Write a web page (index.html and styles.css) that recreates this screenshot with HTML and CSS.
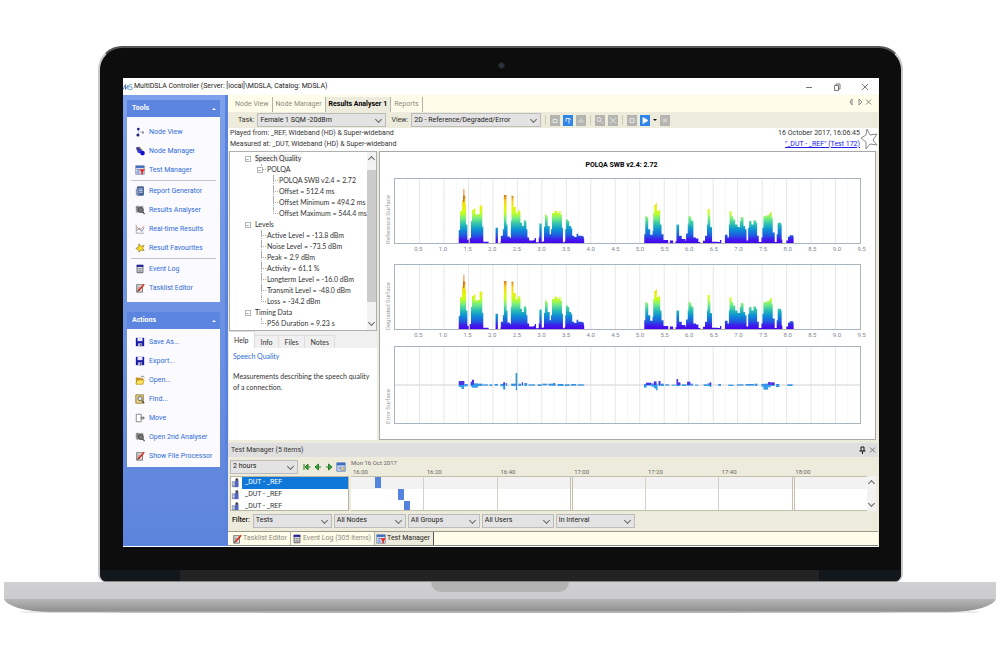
FILE: index.html
```
<!DOCTYPE html>
<html lang="en">
<head>
  <meta charset="UTF-8" />
  <title>MultiDSLA Controller</title>
  <link rel="stylesheet" href="styles.css">
</head>
<body>

<!-- Icon sprite -->
<svg class="sprite" width="0" height="0">
  <symbol id="i-nodes" viewBox="0 0 12 12"><path d="M4 2.500v6.500M4 5l5 1.500" stroke="#b8c0e0" fill="none"/><circle cx="4" cy="2.500" r="1.600" fill="#1c1c9c"/><circle cx="3.500" cy="9.500" r="1.800" fill="#1c1c78"/><circle cx="9.500" cy="6.500" r="1.400" fill="#8a8a96"/></symbol>
  <symbol id="i-nodeman" viewBox="0 0 12 12"><path d="M1 2l5-1 4 4-4 4-4-3z" fill="#d0c87a"/><path d="M1 2l4-1 2 4-4 1z" fill="#3a3a90"/><circle cx="5.500" cy="6" r="2.800" fill="#3838d0"/><circle cx="9" cy="8.500" r="2.800" fill="#1010d0"/></symbol>
  <symbol id="i-test" viewBox="0 0 12 12"><rect x="1" y="1" width="10" height="10" fill="#d8e0f0" stroke="#7a86a0"/><rect x="1" y="1" width="10" height="2.500" fill="#3c6cc0"/><path d="M2.500 5.500h3m-3 2h3m-3 2h3" stroke="#4a7ad0"/><path d="M5 5h7L9.500 8v3h-2V8z" fill="#e0281c"/></symbol>
  <symbol id="i-report" viewBox="0 0 12 12"><path d="M3 1h7v10H3z" fill="#4c6ea8" stroke="#2d456f"/><path d="M1 3h3v8H1z" fill="#8898b8"/><path d="M5 3.500h4m-4 2h4m-4 2h4" stroke="#dfe8f8"/></symbol>
  <symbol id="i-analyse" viewBox="0 0 12 12"><path d="M1 1h9v8H1z" fill="#a8a8a8"/><path d="M1 3h8M1 5h8M3 1v8" stroke="#777"/><circle cx="7" cy="6" r="3" fill="#777" stroke="#444"/><path d="M9 8l2.500 3" stroke="#444" stroke-width="1.500"/></symbol>
  <symbol id="i-real" viewBox="0 0 12 12"><path d="M1.500 1v10H11" stroke="#9a9a9a" fill="none"/><path d="M2 3l3 4 2-1 4-4" stroke="#e08a50" fill="none"/><path d="M2 8l3-3 3 4 3-5" stroke="#6a78b8" fill="none"/></symbol>
  <symbol id="i-fav" viewBox="0 0 12 12"><path d="M5 1l2 3 4-1-2 3 2 3-4-.5L5 11 4 8 1 6.500 4 5z" fill="#ffd820" stroke="#8a7820" stroke-width=".8"/></symbol>
  <symbol id="i-log" viewBox="0 0 12 12"><path d="M2.500 1.500h7v9h-7z" fill="#e0e0e8" stroke="#4a4a58"/><path d="M2 1h8v2.500H2z" fill="#22229a"/><path d="M4 5.500h4m-4 2h4m-4 2h4" stroke="#777"/></symbol>
  <symbol id="i-edit" viewBox="0 0 12 12"><path d="M2 2h7v9H2z" fill="#e4e4e4" stroke="#666"/><path d="M3 5h3M3 7h2" stroke="#777"/><path d="M4 9.500L11 1.500" stroke="#d83020" stroke-width="2"/><path d="M3 10.500l1-2" stroke="#222"/></symbol>
  <symbol id="i-save" viewBox="0 0 12 12"><path d="M1 1h10v10H1z" fill="#1a1aa8"/><path d="M3 1h6v4H3z" fill="#e8e8f8"/><path d="M3.500 7.500h5V11h-5z" fill="#b8b8d0"/><path d="M6.500 8h1v3h-1z" fill="#1a1a60"/></symbol>
  <symbol id="i-open" viewBox="0 0 12 12"><path d="M1 3h4l1 1h4v7H1z" fill="#c89820"/><path d="M3 6h8l-2 5H1z" fill="#ffe860" stroke="#a87c18" stroke-width=".7"/><path d="M7 3l2-2 2 2" stroke="#555" fill="none"/></symbol>
  <symbol id="i-find" viewBox="0 0 12 12"><path d="M1 1h9v10H1z" fill="#e8d080" stroke="#8c7430"/><circle cx="6" cy="5.500" r="2.500" fill="#dce8f8" stroke="#555"/><path d="M8 8l3 3" stroke="#444" stroke-width="1.500"/></symbol>
  <symbol id="i-move" viewBox="0 0 12 12"><path d="M1.500 1.500h6v9h-6z" fill="#fff" stroke="#777"/><path d="M6 6h4" stroke="#555"/><path d="M9 3.500L12 6 9 8.500z" fill="#777"/></symbol>
  <symbol id="i-rec" viewBox="0 0 12 12"><path d="M1 4h5v7H1z" fill="#8a93b0"/><path d="M5 3h4v8H5z" fill="#4c62c4"/><circle cx="7" cy="2" r="1.700" fill="#444"/><path d="M2 6h2m-2 2h2" stroke="#fff"/></symbol>
  <symbol id="i-logo" viewBox="0 0 12 12"><path d="M0 9l3-6v6l3-5v5" stroke="#3a68a8" fill="none"/><path d="M11 3H8v3h3v3H7" stroke="#5aa0c8" fill="none"/></symbol>
  <symbol id="i-cal" viewBox="0 0 12 12"><path d="M1 1h10v10H1z" fill="#cfdcf4" stroke="#5c7cb8"/><path d="M1 1h10v3H1z" fill="#3f6cc4"/><path d="M3 6h3M3 8h3" stroke="#6c8cd0"/><circle cx="8" cy="8" r="2" fill="#f0d890" stroke="#777" stroke-width=".7"/></symbol>
</svg>

<div class="laptop">
  <div class="lid">
    <div class="camera"></div>

    <div class="screen">
      <header class="titlebar">
        <svg class="icon"><use href="#i-logo"/></svg>
        <span class="title">MultiDSLA Controller (Server: [local]\MDSLA, Catalog: MDSLA)</span>
        <button class="winbtn" aria-label="Minimise"><svg viewBox="0 0 8 8"><path d="M1 4.500h6"/></svg></button>
        <button class="winbtn" aria-label="Restore"><svg viewBox="0 0 8 8"><path d="M1.500 2.500h4v5h-4zM3 2.500v-1.500h4v5H5.500"/></svg></button>
        <button class="winbtn" aria-label="Close"><svg viewBox="0 0 8 8"><path d="M1 1l6 6M7 1L1 7"/></svg></button>
      </header>

      <div class="app">
        <!-- Left side -->
        <nav class="sidebar">
          <section class="group">
            <h2>Tools <i class="up"></i></h2>
            <div class="links tools">
              <a href="#"><svg class="icon"><use href="#i-nodes"/></svg>Node View</a>
              <a href="#"><svg class="icon"><use href="#i-nodeman"/></svg>Node Manager</a>
              <a href="#"><svg class="icon"><use href="#i-test"/></svg>Test Manager</a>
              <hr>
              <a href="#"><svg class="icon"><use href="#i-report"/></svg>Report Generator</a>
              <a href="#"><svg class="icon"><use href="#i-analyse"/></svg>Results Analyser</a>
              <a href="#"><svg class="icon"><use href="#i-real"/></svg>Real-time Results</a>
              <a href="#"><svg class="icon"><use href="#i-fav"/></svg>Result Favourites</a>
              <hr>
              <a href="#"><svg class="icon"><use href="#i-log"/></svg>Event Log</a>
              <a href="#"><svg class="icon"><use href="#i-edit"/></svg>Tasklist Editor</a>
            </div>
          </section>
          <section class="group">
            <h2>Actions <i class="up"></i></h2>
            <div class="links">
              <a href="#"><svg class="icon"><use href="#i-save"/></svg>Save As...</a>
              <a href="#"><svg class="icon"><use href="#i-save"/></svg>Export...</a>
              <a href="#"><svg class="icon"><use href="#i-open"/></svg>Open...</a>
              <a href="#"><svg class="icon"><use href="#i-find"/></svg>Find...</a>
              <a href="#"><svg class="icon"><use href="#i-move"/></svg>Move</a>
              <a href="#"><svg class="icon"><use href="#i-analyse"/></svg>Open 2nd Analyser</a>
              <a href="#"><svg class="icon"><use href="#i-edit"/></svg>Show File Processor</a>
            </div>
          </section>
        </nav>

        <main class="content">
          <div class="tabs">
            <button>Node View</button>
            <button>Node Manager</button>
            <button class="active">Results Analyser 1</button>
            <button>Reports</button>
            <svg class="tabnav" viewBox="0 0 24 8"><path d="M4 1v6L2 4zM11 1v6l3-3zM18 1.500l5 5M23 1.500l-5 5"/></svg>
          </div>

          <div class="toolbar">
            <label for="task">Task:</label>
            <span class="pick task"><select id="task"><option>Female 1 SQM -20dBm</option></select></span>
            <label for="view">View:</label>
            <span class="pick view"><select id="view"><option>2D - Reference/Degraded/Error</option></select></span>
            <i class="grip"></i>
            <button class="tool" aria-label="Spectrum"><svg viewBox="0 0 10 10"><path d="M3 7h4V4H3z"/></svg></button>
            <button class="tool on" aria-label="Surface"><svg viewBox="0 0 10 10"><path d="M3 3h3v5M6 3l2 1M3 3v3"/></svg></button>
            <button class="tool" aria-label="Histogram"><svg viewBox="0 0 10 10"><path d="M3 7V5M5 7V3M7 7V5"/></svg></button>
            <i class="grip"></i>
            <button class="tool" aria-label="Zoom"><svg viewBox="0 0 10 10"><circle cx="4" cy="4" r="2"/><path d="M6 6l2 2"/></svg></button>
            <button class="tool" aria-label="Zoom out"><svg viewBox="0 0 10 10"><path d="M2 2l6 6M8 2L2 8"/></svg></button>
            <i class="grip"></i>
            <button class="tool" aria-label="Stop"><svg viewBox="0 0 10 10"><path d="M3 3h4v4H3z"/></svg></button>
            <button class="tool on" aria-label="Play"><svg viewBox="0 0 10 10"><path d="M3 2l5 3-5 3z" fill="#fff"/></svg></button>
            <i class="drop"></i>
            <button class="tool" aria-label="Pause"><svg viewBox="0 0 10 10"><path d="M4 3v4M6 3v4"/></svg></button>
          </div>

          <div class="info">
            <div>
              <p>Played from: _REF, Wideband (HD) &amp; Super-wideband</p>
              <p>Measured at: _DUT, Wideband (HD) &amp; Super-wideband</p>
            </div>
            <div class="when">
              <p>16 October 2017, 16:06:45</p>
              <p><a href="#">"_DUT - _REF" (Test 172)</a></p>
            </div>
            <svg class="star" viewBox="0 0 18 22"><path d="M7 1l3 6 7-1-4 6 4 5-7-1-4 5v-7L1 10l5-3z"/></svg>
          </div>

          <div class="analyser">
            <div class="left">
              <div class="treebox">
                <ul class="tree">
                  <li><b>−</b><span class="sel">Speech Quality</span>
                    <ul>
                      <li><b>−</b>POLQA
                        <ul>
                          <li>POLQA SWB v2.4 = 2.72</li>
                          <li>Offset = 512.4 ms</li>
                          <li>Offset Minimum = 494.2 ms</li>
                          <li>Offset Maximum = 544.4 ms</li>
                        </ul>
                      </li>
                    </ul>
                  </li>
                  <li><b>−</b>Levels
                    <ul>
                      <li>Active Level = -13.8 dBm</li>
                      <li>Noise Level = -73.5 dBm</li>
                      <li>Peak = 2.9 dBm</li>
                      <li>Activity = 61.1 %</li>
                      <li>Longterm Level = -16.0 dBm</li>
                      <li>Transmit Level = -48.0 dBm</li>
                      <li>Loss = -34.2 dBm</li>
                    </ul>
                  </li>
                  <li><b>−</b>Timing Data
                    <ul>
                      <li>P56 Duration = 9.23 s</li>
                    </ul>
                  </li>
                </ul>
                <div class="scroll"><i class="chev flip"></i><i class="thumb"></i><i class="chev"></i></div>
              </div>
              <div class="subtabs">
                <button class="active">Help</button>
                <button>Info</button>
                <button>Files</button>
                <button>Notes</button>
              </div>
              <div class="help">
                <h3>Speech Quality</h3>
                <p>Measurements describing the speech quality of a connection.</p>
              </div>
            </div>

            <div class="charts">
              <h1>POLQA SWB v2.4: 2.72</h1>
              <div class="chart">
                <span class="ylabel">Reference Surface</span>
                <svg class="plot surface" viewBox="0 0 1401 196" preserveAspectRatio="none"></svg>
                <div class="axis"></div>
              </div>
              <div class="chart">
                <span class="ylabel">Degraded Surface</span>
                <svg class="plot surface" viewBox="0 0 1401 196" preserveAspectRatio="none"></svg>
                <div class="axis"></div>
              </div>
              <div class="chart error">
                <span class="ylabel">Error Surface</span>
                <svg class="plot diff" viewBox="0 0 1401 230" preserveAspectRatio="none"></svg>
              </div>
            </div>
          </div>

          <!-- Test manager -->
          <section class="manager">
            <h2>Test Manager (5 items)
              <svg viewBox="0 0 18 8"><path d="M3 1h3v4M3 1v4M1.500 5h6M4.500 5v3" stroke="#111"/><path d="M12 1.500l5 5M17 1.500l-5 5"/></svg>
            </h2>
            <div class="grid">
              <div class="range">
                <span class="pick hours"><select aria-label="Range"><option>2 hours</option></select></span>
                <button aria-label="First"><svg viewBox="0 0 8 8"><path d="M1 1v6M7.500 4H4" /><path d="M5 1v6L2 4z"/></svg></button>
                <button aria-label="Previous"><svg viewBox="0 0 8 8"><path d="M7 4H4"/><path d="M4.500 1v6L1 4z"/></svg></button>
                <button aria-label="Next"><svg viewBox="0 0 8 8"><path d="M1 4h3"/><path d="M3.500 1v6L7 4z"/></svg></button>
                <svg class="icon"><use href="#i-cal"/></svg>
              </div>
              <div class="times">
                <p>Mon 16 Oct 2017</p>
                <div class="ticks">
                  <span>16:00</span><span>16:20</span><span>16:40</span><span>17:00</span><span>17:20</span><span>17:40</span><span>18:00</span>
                </div>
              </div>
              <ul class="tests">
                <li class="active"><svg class="icon"><use href="#i-rec"/></svg><span>_DUT - _REF</span></li>
                <li><svg class="icon"><use href="#i-rec"/></svg><span>_DUT - _REF</span></li>
                <li><svg class="icon"><use href="#i-rec"/></svg><span>_DUT - _REF</span></li>
              </ul>
              <div class="lanes">
                <div class="cells"><i></i><i></i><i class="hour"></i><i></i><i></i><i class="hour"></i><i></i></div>
                <div class="scroll"><i class="chev flip"></i><i class="chev"></i></div>
              </div>
            </div>
            <div class="filter">
              <strong>Filter:</strong>
              <span class="pick wide"><select aria-label="Type"><option>Tests</option></select></span>
              <span class="pick"><select aria-label="Nodes"><option>All Nodes</option></select></span>
              <span class="pick"><select aria-label="Groups"><option>All Groups</option></select></span>
              <span class="pick"><select aria-label="Users"><option>All Users</option></select></span>
              <span class="pick wide"><select aria-label="Interval"><option>In Interval</option></select></span>
            </div>
          </section>

          <div class="dock">
            <button><svg class="icon"><use href="#i-edit"/></svg>Tasklist Editor</button>
            <button><svg class="icon"><use href="#i-log"/></svg>Event Log (305 items)</button>
            <button class="active"><svg class="icon"><use href="#i-test"/></svg>Test Manager</button>
          </div>
        </main>
      </div>
    </div>

    <div class="hinge"></div>
  </div>
  <div class="base"><div class="notch"></div></div>
  <div class="foot"></div>
</div>

<script src="script.js"></script>
</body>
</html>
```
FILE: styles.css
```
* {
  box-sizing: border-box;
}

body {
  margin: 0;
  padding: 46px 4px 0;
  background: #fff;
  font-family: Roboto, "Liberation Sans", sans-serif;
  font-size: 7px;
  line-height: 11px;
  color: #333;
}

h1, h2, h3, p, ul {
  margin: 0;
  padding: 0;
  font-size: 7px;
}

ul {
  list-style: none;
}

button, select {
  font: inherit;
  color: inherit;
  border: 0;
  padding: 0;
  margin: 0;
  background: none;
}

svg {
  display: block;
}

.sprite {
  position: absolute;
}

.icon {
  width: 10px;
  height: 10px;
  flex: none;
}

/* laptop */
.lid {
  margin: 0 93px 0 94px;
  padding: 0 22px 0 23px;
  background: #0d0d0d;
  border: 2px solid #c8c8ca;
  border-top-color: #55575a;
  border-bottom: 1px solid #888;
  border-radius: 24px 24px 8px 8px;
}

.camera {
  height: 30px;
  display: flex;
  justify-content: center;
  align-items: center;
}

.camera::before {
  content: "";
  width: 5px;
  height: 5px;
  margin-top: 4px;
  border-radius: 50%;
  background: #2c3440;
  border: 1px solid #1c1c1c;
}

.hinge {
  height: 11px;
  margin: 23px -22px 0 -23px;
  border-radius: 0 0 6px 6px;
  background: linear-gradient(90deg, #11171b 80px, #232323 80px, #232323 calc(100% - 82px), #11171b calc(100% - 82px));
}

.base {
  height: 30px;
  background: linear-gradient(#d0d0d2 0, #cbcbcd 17px, #b6b6b6 17px, #8e8e8e 100%);
  border-radius: 0 0 48px 48px / 0 0 14px 14px;
}

.notch {
  width: 138px;
  height: 10px;
  margin: 0 auto;
  background: #b3b3b3;
  border-radius: 0 0 10px 10px;
}

.foot {
  height: 2px;
  margin: -1px 12px 0;
  border-radius: 50%;
  background: #b0b0b0;
}

/* window */
.screen {
  background: #fff;
  padding-bottom: 1px;
}

.titlebar {
  display: flex;
  align-items: center;
  gap: 1px;
  height: 17px;
  padding-right: 1px;
}

.title {
  flex: 1;
  color: #222;
}

.winbtn {
  width: 27px;
  display: flex;
  justify-content: center;
}

.winbtn svg {
  width: 8px;
  height: 8px;
  fill: none;
  stroke: #777;
}

.app {
  display: flex;
}

/* sidebar */
.sidebar {
  width: 105px;
  flex: none;
  padding: 5px 5px 0 4px;
  background: linear-gradient(#7fa0ea, #5d84dc);
  border-right: 3px solid #5a83de;
}

.group {
  margin-bottom: 10px;
}

.group h2 {
  display: flex;
  justify-content: space-between;
  align-items: center;
  height: 17px;
  padding: 0 4px 0 5px;
  background: #5b85de;
  color: #fff;
}

.up {
  border: 2px solid transparent;
  border-bottom: 2px solid #fff;
  margin-top: -2px;
}

.links {
  display: flex;
  flex-direction: column;
  gap: 1px;
  padding: 4px 4px 2px;
  background: #fbfbff;
}

.links.tools {
  padding: 6px 4px 5px;
}

.links a {
  display: flex;
  align-items: center;
  gap: 4px;
  height: 18px;
  padding-left: 4px;
  color: #2f6bd6;
  text-decoration: none;
  white-space: nowrap;
}

.links hr {
  width: 100%;
  height: 1px;
  margin: 0;
  border: 0;
  background: #c4c4c8;
}

/* right side */
.content {
  flex: 1;
  min-width: 0;
  display: flex;
  flex-direction: column;
  background: #edebdb;
  padding-right: 1px;
}

.tabs {
  display: flex;
  height: 17px;
  padding: 2px 4px 0 4px;
  background: #fffde9;
}

.tabs button {
  padding: 0 3px;
  border-right: 1px solid #b4b2a6;
  color: #8c8a82;
}

.tabs .active {
  background: #edebdb;
  color: #000;
  font-weight: bold;
}

.tabnav {
  width: 24px;
  height: 8px;
  margin: 1px 2px 0 auto;
  fill: none;
  stroke: #888;
}

.toolbar {
  display: flex;
  align-items: center;
  gap: 3px;
  height: 16px;
  padding-left: 10px;
}

.pick {
  position: relative;
  flex: none;
  height: 14px;
  border: 1px solid #bcbcbc;
  background: #e3e3e3;
}

.pick select {
  appearance: none;
  display: block;
  width: 100%;
  height: 12px;
  padding-left: 2px;
  color: #222;
}

.pick::after,
.chev::after {
  content: "";
  display: block;
  width: 4px;
  height: 4px;
  border: solid #666;
  border-width: 0 1px 1px 0;
  transform: rotate(45deg);
}

.pick::after {
  position: absolute;
  right: 4px;
  top: 3px;
}

.task {
  width: 129px;
}

.view {
  width: 130px;
}

.toolbar label[for="view"] {
  margin-left: 2px;
}

.grip {
  width: 1px;
  height: 10px;
  margin: 0 1px;
  background: #cbc8ba;
}

.tool {
  width: 10px;
  height: 11px;
  background: #b4b4b0;
}

.tool svg {
  width: 10px;
  height: 11px;
  fill: none;
  stroke: #e8e8e4;
}

.tool.on {
  background: #2f86ea;
}

.drop {
  border: 2px solid transparent;
  border-top-color: #111;
  margin-top: 2px;
}

.info {
  display: flex;
  height: 23px;
  padding-left: 2px;
  background: #fff;
}

.when {
  margin-left: auto;
  text-align: right;
}

.when a {
  color: #2020ee;
}

.star {
  width: 18px;
  height: 22px;
  fill: #fff;
  stroke: #888;
}

.analyser {
  display: flex;
  gap: 2px;
  padding: 0 2px 3px 1px;
}

.left {
  width: 148px;
  flex: none;
  display: flex;
  flex-direction: column;
  font-family: Lato, "Liberation Sans", sans-serif;
}

.treebox {
  display: flex;
  height: 180px;
  overflow: hidden;
  background: #fff;
  border: 1px solid #b0b0b0;
}

.tree {
  flex: 1;
  padding: 1px 0 0 20px;
  white-space: nowrap;
}

.tree li {
  position: relative;
  padding-left: 5px;
}

.tree ul {
  margin-left: -2px;
  padding-left: 8px;
}

.tree ul li {
  border-left: 1px dotted #aaa;
}

.tree ul li:last-child {
  border-left-color: transparent;
}

.tree ul li::before {
  content: "";
  position: absolute;
  left: -1px;
  top: 0;
  width: 4px;
  height: 5px;
  border: dotted #aaa;
  border-width: 0 0 1px 1px;
}

.tree b {
  position: absolute;
  left: -5px;
  top: 3px;
  z-index: 1;
  width: 6px;
  height: 6px;
  border: 1px solid #b4b4b4;
  background: #fff;
  font-size: 5px;
  line-height: 4px;
  color: #555;
}

.sel {
  background: #f0f0f0;
}

.scroll {
  width: 9px;
  display: flex;
  flex-direction: column;
  justify-content: space-between;
  align-items: center;
  padding: 5px 0;
  background: #f2f2f2;
}

.thumb {
  width: 9px;
  flex: 1;
  margin: 8px 0 18px;
  background: #cbcbcb;
}

.flip {
  transform: rotate(180deg);
}

.subtabs {
  display: flex;
  align-items: flex-end;
  height: 17px;
  background: #f0f0f0;
}

.subtabs button {
  height: 13px;
  padding: 0 5px 0 6px;
  border: 1px solid #ddd;
  border-width: 1px 1px 0 0;
}

.subtabs .active {
  height: 17px;
  padding-left: 5px;
  background: #fff;
}

.help {
  flex: 1;
  padding: 3px 0 3px 4px;
  background: #fff;
}

.help h3 {
  margin-bottom: 9px;
  font-weight: normal;
  color: #2b6cd4;
}

.charts {
  flex: 1;
  min-width: 0;
  height: 289px;
  padding: 8px 14px 0 2px;
  background: #fff;
  border: 1px solid #a8a8a8;
}

.charts h1 {
  height: 18px;
  text-align: center;
  color: #000;
}

.chart {
  display: grid;
  grid-template-columns: 12px 1fr;
  grid-template-rows: 66px 20px;
}

.chart.error {
  grid-template-rows: 78px;
  margin-top: -4px;
}

.ylabel {
  writing-mode: vertical-rl;
  transform: rotate(180deg);
  font-size: 6px;
  line-height: 12px;
  text-align: left;
  white-space: nowrap;
  color: #a0a0a0;
}

.plot {
  width: 100%;
  height: 100%;
  border: 1px solid #aab4be;
}

.axis {
  grid-column: 2;
  display: flex;
  margin: 0 -13px 0 12px;
}

.axis span {
  flex: 1;
  text-align: center;
  font-size: 6px;
  line-height: 9px;
  color: #7c8794;
}

/* test manager */
.manager h2 {
  display: flex;
  justify-content: space-between;
  align-items: center;
  height: 14px;
  padding: 0 2px 0 3px;
  background: #dfdfdf;
  font-weight: normal;
}

.manager h2 svg {
  width: 18px;
  height: 8px;
  fill: none;
  stroke: #777;
}

.grid {
  display: grid;
  grid-template-columns: 119px 1fr;
  grid-template-rows: 19px 35px;
  column-gap: 2px;
  padding: 0 2px;
}

.range {
  display: flex;
  align-items: center;
  gap: 3px;
}

.range .hours {
  width: 68px;
  margin-right: 2px;
}

.range button svg {
  width: 8px;
  height: 8px;
  fill: #3aa83a;
  stroke: #2a7a2a;
}

.times {
  padding-top: 1px;
  font-size: 6px;
  line-height: 9px;
  color: #666;
}

.times p {
  font-size: 6px;
}

.ticks {
  display: flex;
  padding-right: 9px;
}

.ticks span {
  flex: 1;
  padding-left: 2px;
}

.tests {
  overflow: hidden;
  background: #fff;
  border: 1px solid #b8b4a4;
}

.tests li {
  display: flex;
  align-items: center;
  gap: 1px;
  height: 12px;
}

.tests span {
  flex: 1;
  height: 12px;
  padding-left: 3px;
}

.tests .active span {
  background: #0f78d8;
  color: #fff;
}

.lanes {
  display: flex;
}

.cells {
  position: relative;
  flex: 1;
  display: flex;
  background: linear-gradient(#f2f2f2 12px, #fff 12px);
  border: solid #c4c0b0;
  border-width: 1px 0;
}

.cells i {
  flex: 1;
  border-right: 1px solid #d4d2c8;
}

.cells .hour {
  border-right: 3px double #c4c0b0;
}

.cells i:last-of-type {
  border-right: 0;
}

.cells .run {
  position: absolute;
  width: 6px;
  height: 11px;
  background: #5584e0;
}

.filter {
  display: flex;
  align-items: center;
  gap: 2px;
  height: 19px;
  padding-left: 4px;
  color: #111;
}

.filter strong {
  font-weight: 500;
  margin-right: 1px;
}

.filter .pick {
  flex: 0 0 72px;
}

.filter .pick.wide {
  flex-basis: 79px;
}

.dock {
  display: flex;
  height: 15px;
  margin-top: 1px;
  padding-left: 3px;
  background: #fffde9;
  border-top: 1px solid #9c9a8c;
  border-bottom: 1px solid #888;
}

.dock button {
  display: flex;
  align-items: center;
  gap: 1px;
  padding: 0 3px 0 1px;
  border-right: 1px solid #b4b2a6;
  color: #8c8a82;
}

.dock .active {
  background: #edebdb;
  border-color: #555;
  color: #222;
}
```
FILE: script.js
```
const NS = "http://www.w3.org/2000/svg";
const WIDTH = 1401;
const STEP = WIDTH / 19;

// silhouette of the speech surface: x, level pairs
const level = [
  192,40, 196,98, 202,130, 205,165, 209,145, 212,120, 214,57, 218,10, 222,0,
  225,15, 229,67, 232,102, 238,106, 242,87, 249,89, 255,114, 260,115, 263,50, 266,4, 279,4, 282,0,
  303,0, 303,47, 309,47, 310,0,
  318,5, 319,22, 325,42, 328,147, 334,147, 336,57, 339,20, 346,15,
  349,67, 351,145, 355,145, 357,110, 364,92, 370,100, 376,96, 378,62, 383,52, 388,70, 394,66, 396,42, 399,17, 404,8, 418,10, 421,15, 425,2,
  433,17, 435,60, 440,60, 442,4,
  447,5, 449,50, 452,87, 457,82, 460,52, 466,27, 470,42, 473,92, 481,99, 489,92, 495,98, 499,87, 503,47, 506,2,
  511,5, 513,42, 515,72, 521,67, 525,52, 531,45, 534,22, 540,18, 547,28, 552,22, 565,20, 569,12, 570,0,
  750,0, 751,27, 754,82, 759,79, 763,42, 769,25, 776,37, 778,92, 781,117, 786,122, 789,98, 796,102, 799,57, 803,27, 809,9, 819,9, 823,0,
  828,8, 836,8, 838,0, 845,5, 848,57, 853,57, 856,22, 864,12, 875,7,
  877,29, 882,57, 884,82, 891,77, 893,69, 897,67, 899,17, 907,14, 914,3, 920,0,
  928,7, 934,22, 940,57, 942,104, 948,82, 950,49, 954,47, 955,4, 972,3, 979,9, 983,0,
  994,0, 994,25, 1002,17, 1006,57, 1008,97, 1014,82, 1019,72, 1025,57, 1032,49, 1039,67, 1042,80, 1048,77, 1050,52, 1055,42, 1059,8,
  1064,47, 1067,67, 1074,57, 1080,69, 1088,62, 1091,22, 1096,3,
  1104,17, 1107,47, 1110,82, 1120,85, 1127,89, 1130,95, 1135,77, 1138,32, 1144,3,
  1150,27, 1153,62, 1163,57, 1165,10, 1167,0,
  1179,8, 1184,19, 1189,24, 1200,19, 1201,0
];

// error surface: x, width, above, below
const errors = [
  [192,17,12,6], [200,8,7,12], [209,10,3,4], [228,6,10,5], [232,6,16,8], [236,14,5,8], [250,14,4,3],
  [266,14,2,2], [285,8,2,3], [300,10,3,2], [318,10,3,4], [326,6,8,14], [334,4,6,3], [350,14,4,3],
  [364,4,36,16], [372,8,4,3], [382,4,8,2], [390,8,6,3], [402,20,2,2], [430,12,2,3], [444,14,4,1],
  [462,22,4,2], [476,6,6,2], [490,18,3,3], [512,14,2,3], [530,16,3,2], [550,20,2,2],
  [750,8,3,8], [756,16,7,2], [772,8,5,5], [780,8,11,10], [786,5,4,16], [794,6,12,3], [800,10,4,3], [814,12,2,2],
  [834,12,1,2], [848,5,18,4], [852,8,8,3], [864,14,2,3], [880,10,10,2], [890,8,4,2], [904,10,1,2],
  [930,12,2,3], [942,10,5,3], [948,5,8,6], [974,8,3,3], [1004,16,1,3], [1030,20,2,2], [1056,26,3,2], [1084,8,4,3],
  [1104,8,3,5], [1110,14,4,14], [1124,8,9,7], [1132,12,8,3], [1148,10,3,6], [1182,16,2,3]
];

function add(parent, tag, attrs) {
  const el = document.createElementNS(NS, tag);
  for (const key in attrs) el.setAttribute(key, attrs[key]);
  parent.appendChild(el);
  return el;
}

function drawGrid(svg, height) {
  for (let i = 1; i < 38; i++) {
    add(svg, "rect", { x: i * STEP / 2 - 1.5, y: 0, width: 3, height: height, fill: i % 2 ? "#f7f7f7" : "#e6e6e8" });
  }
}

document.querySelectorAll(".surface").forEach((svg, n) => {
  drawGrid(svg, 196);
  const grad = add(svg, "linearGradient", { id: "heat" + n, gradientUnits: "userSpaceOnUse", x1: 0, y1: 196, x2: 0, y2: 26 });
  const stops = [[0, "#4a00f0"], [0.07, "#3c20ea"], [0.14, "#1f5ce0"], [0.24, "#0c90d4"], [0.34, "#2cc0b0"],
    [0.44, "#74ec84"], [0.54, "#c4ff20"], [0.64, "#e8f010"], [0.76, "#f4d020"], [0.86, "#d87820"], [1, "#e8b080"]];
  stops.forEach(s => add(grad, "stop", { offset: s[0], "stop-color": s[1] }));

  // stepped columns, one per sample
  let d = "M192 196";
  for (let i = 0; i < level.length; i += 2) {
    d += "H" + level[i] + "V" + (196 - level[i + 1]);
  }
  add(svg, "path", { d: d + "V196z", fill: "url(#heat" + n + ")" });
  add(svg, "rect", { x: 206, y: 30, width: 3, height: 22, fill: "#f0c8a0" });
  add(svg, "rect", { x: 205, y: 50, width: 4, height: 20, fill: "#c87820" });
});

document.querySelectorAll(".diff").forEach(svg => {
  drawGrid(svg, 230);
  add(svg, "rect", { x: 0, y: 113, width: WIDTH, height: 4, fill: "#dedee0" });
  errors.forEach(e => {
    add(svg, "rect", { x: e[0], y: 115 - e[2], width: e[1], height: e[2], fill: e[2] > 6 ? "#4a34e6" : "#3a8ee6" });
    add(svg, "rect", { x: e[0], y: 115, width: e[1], height: e[3], fill: "#2e9ce8" });
  });
  add(svg, "rect", { x: 364, y: 79, width: 4, height: 34, fill: "#24a8b8" });
});

document.querySelectorAll(".axis").forEach(axis => {
  for (let t = 1; t <= 19; t++) {
    const label = document.createElement("span");
    label.textContent = (t / 2).toFixed(1);
    axis.appendChild(label);
  }
});

// finished runs, minutes after 16:00
const runs = [6.5, 12.7, 14.5];
const cells = document.querySelector(".cells");
runs.forEach((minute, row) => {
  const run = document.createElement("div");
  run.className = "run";
  run.style.left = minute / 140 * 100 + "%";
  run.style.top = row * 12 + "px";
  run.style.height = row === 2 ? "9px" : "11px";
  cells.appendChild(run);
});
```
